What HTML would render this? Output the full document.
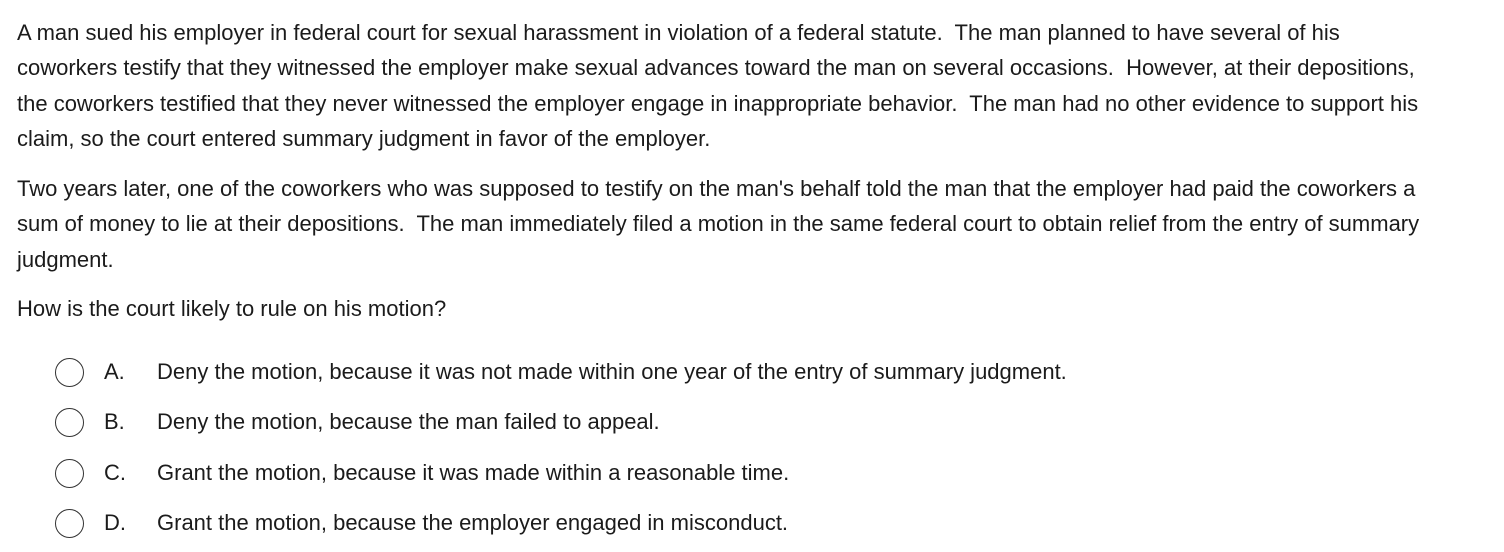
<!DOCTYPE html>
<html><head><meta charset="utf-8"><style>
html,body{margin:0;padding:0;background:#fff;width:1504px;height:552px;overflow:hidden}
body{font-family:"Liberation Sans",Arial,sans-serif;font-size:22px;color:#1b1b1b}
.p{position:absolute;left:17px;line-height:35.3px;white-space:pre}
.opt{position:absolute;left:0;height:30px;width:1300px}
.c{position:absolute;left:55px;top:0;width:29px;height:29px;border:1.5px solid #333;border-radius:50%;box-sizing:border-box}
.l{position:absolute;left:104px;top:1px}
.t{position:absolute;left:157px;top:1px}
</style></head><body>
<div class="p" style="top:15px">A man sued his employer in federal court for sexual harassment in violation of a federal statute.  The man planned to have several of his
coworkers testify that they witnessed the employer make sexual advances toward the man on several occasions.  However, at their depositions,
the coworkers testified that they never witnessed the employer engage in inappropriate behavior.  The man had no other evidence to support his
claim, so the court entered summary judgment in favor of the employer.</div>
<div class="p" style="top:171px">Two years later, one of the coworkers who was supposed to testify on the man's behalf told the man that the employer had paid the coworkers a
sum of money to lie at their depositions.  The man immediately filed a motion in the same federal court to obtain relief from the entry of summary
judgment.</div>
<div class="p" style="top:291px">How is the court likely to rule on his motion?</div>
<div class="opt" style="top:358px"><div class="c"></div><div class="l">A.</div><div class="t">Deny the motion, because it was not made within one year of the entry of summary judgment.</div></div>
<div class="opt" style="top:408px"><div class="c"></div><div class="l">B.</div><div class="t">Deny the motion, because the man failed to appeal.</div></div>
<div class="opt" style="top:459px"><div class="c"></div><div class="l">C.</div><div class="t">Grant the motion, because it was made within a reasonable time.</div></div>
<div class="opt" style="top:509px"><div class="c"></div><div class="l">D.</div><div class="t">Grant the motion, because the employer engaged in misconduct.</div></div>
</body></html>
